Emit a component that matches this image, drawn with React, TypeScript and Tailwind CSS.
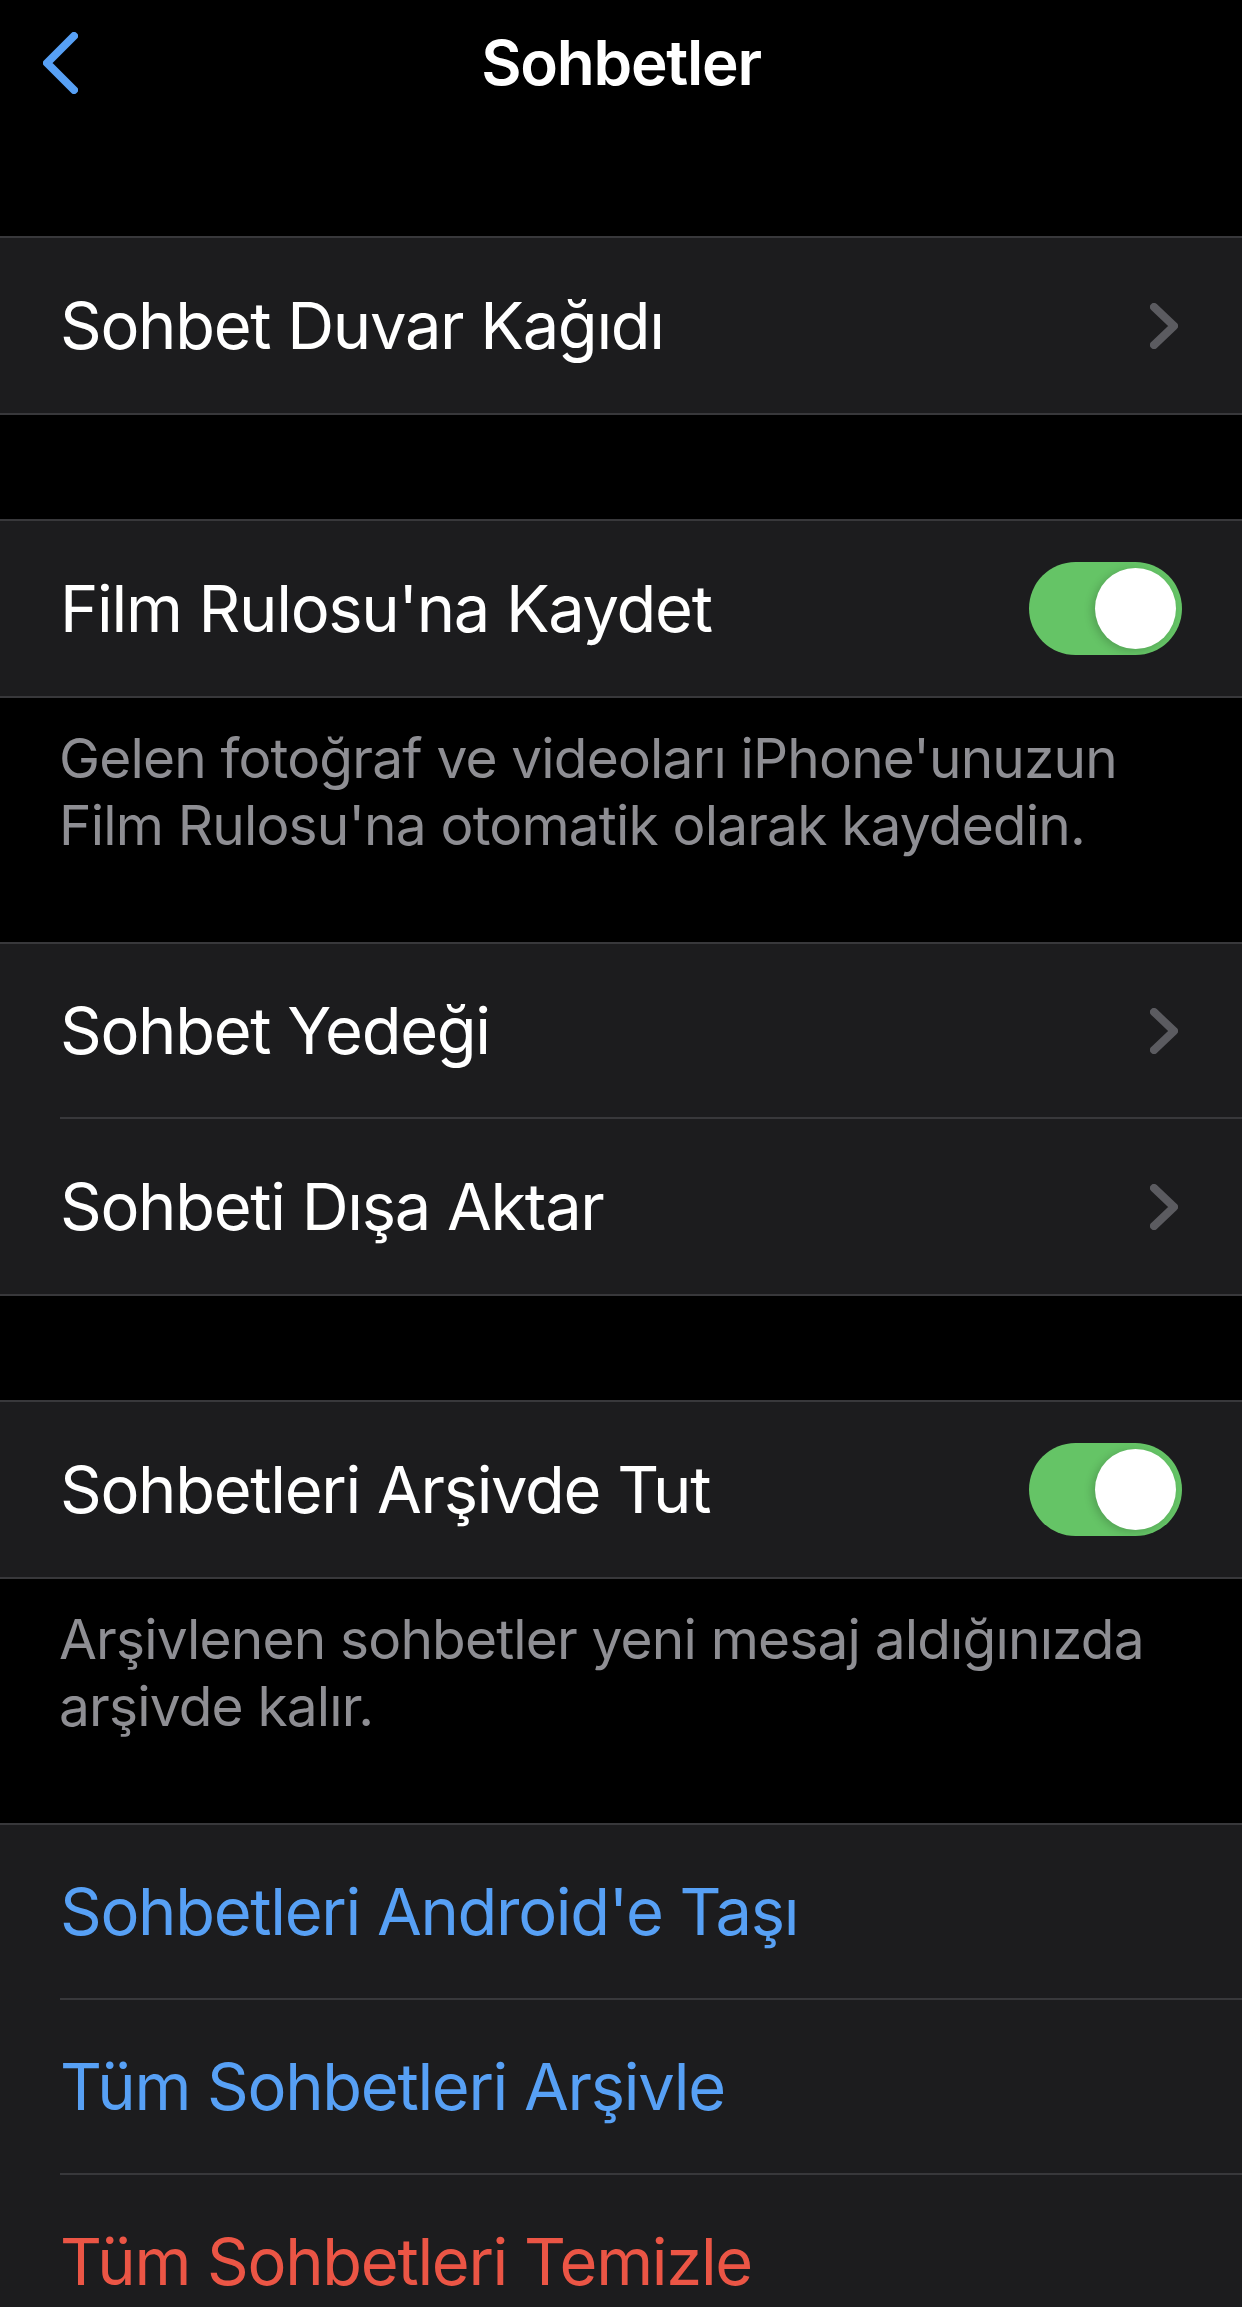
import { ReactNode } from "react";

const font = { fontFamily: "Inter, 'Noto Sans', sans-serif" };

function Chevron() {
  return (
    <svg width="28" height="46" viewBox="0 0 28 46" className="mr-[4px] shrink-0">
      <path
        d="M4 4 L24 23 L4 42"
        fill="none"
        stroke="#5b5b60"
        strokeWidth="8"
        strokeLinecap="round"
        strokeLinejoin="round"
      />
    </svg>
  );
}

function Toggle() {
  return (
    <div className="flex h-[93px] w-[153px] shrink-0 items-center justify-end rounded-full bg-[#65c466] p-[6px]">
      <div className="h-[81px] w-[81px] rounded-full bg-white shadow-[-3px_2px_8px_rgba(0,0,0,0.18)]" />
    </div>
  );
}

interface RowProps {
  label: string;
  color?: string;
  right?: ReactNode;
  last?: boolean;
}

function Row({ label, color = "text-white", right, last }: RowProps) {
  return (
    <div className="pl-[60px]">
      <div
        className={`flex h-[175px] items-center justify-between pr-[60px] ${
          last ? "" : "border-b-2 border-[#38383b]"
        }`}
      >
        <span className={`text-[65px] tracking-[-0.02em] ${color}`}>{label}</span>
        {right}
      </div>
    </div>
  );
}

function Section({ children }: { children: ReactNode }) {
  return <div className="border-y-2 border-[#38383b] bg-[#1c1c1e]">{children}</div>;
}

function Footer({ lines }: { lines: string[] }) {
  return (
    <div className="h-[244px] pl-[59px] pt-[27px] text-[55px] leading-[67px] tracking-[-0.015em] text-[#8e8e93]">
      {lines.map((l) => (
        <div key={l}>{l}</div>
      ))}
    </div>
  );
}

export default function App() {
  return (
    <div className="min-h-[2307px] w-[1242px] overflow-hidden bg-black" style={font}>
      {/* nav bar */}
      <div className="grid h-[124px] grid-cols-[1fr_auto_1fr] items-center">
        <div className="pl-[43px] pt-[2px]">
          <svg width="35" height="62" viewBox="0 0 35 62">
            <path
              d="M31 4 L4 31 L31 58"
              fill="none"
              stroke="#57a0f5"
              strokeWidth="8"
              strokeLinecap="round"
              strokeLinejoin="round"
            />
          </svg>
        </div>
        <div className="text-[62px] font-semibold tracking-[-0.02em] text-white">Sohbetler</div>
        <div />
      </div>
      <div className="h-[112px]" />

      <Section>
        <Row label="Sohbet Duvar Kağıdı" right={<Chevron />} last />
      </Section>
      <div className="h-[104px]" />

      <Section>
        <Row label="Film Rulosu'na Kaydet" right={<Toggle />} last />
      </Section>
      <Footer
        lines={[
          "Gelen fotoğraf ve videoları iPhone'unuzun",
          "Film Rulosu'na otomatik olarak kaydedin.",
        ]}
      />

      <Section>
        <Row label="Sohbet Yedeği" right={<Chevron />} />
        <Row label="Sohbeti Dışa Aktar" right={<Chevron />} last />
      </Section>
      <div className="h-[104px]" />

      <Section>
        <Row label="Sohbetleri Arşivde Tut" right={<Toggle />} last />
      </Section>
      <Footer lines={["Arşivlenen sohbetler yeni mesaj aldığınızda", "arşivde kalır."]} />

      <Section>
        <Row label="Sohbetleri Android'e Taşı" color="text-[#57a0f5]" />
        <Row label="Tüm Sohbetleri Arşivle" color="text-[#57a0f5]" />
        <Row label="Tüm Sohbetleri Temizle" color="text-[#eb5545]" />
      </Section>
    </div>
  );
}
